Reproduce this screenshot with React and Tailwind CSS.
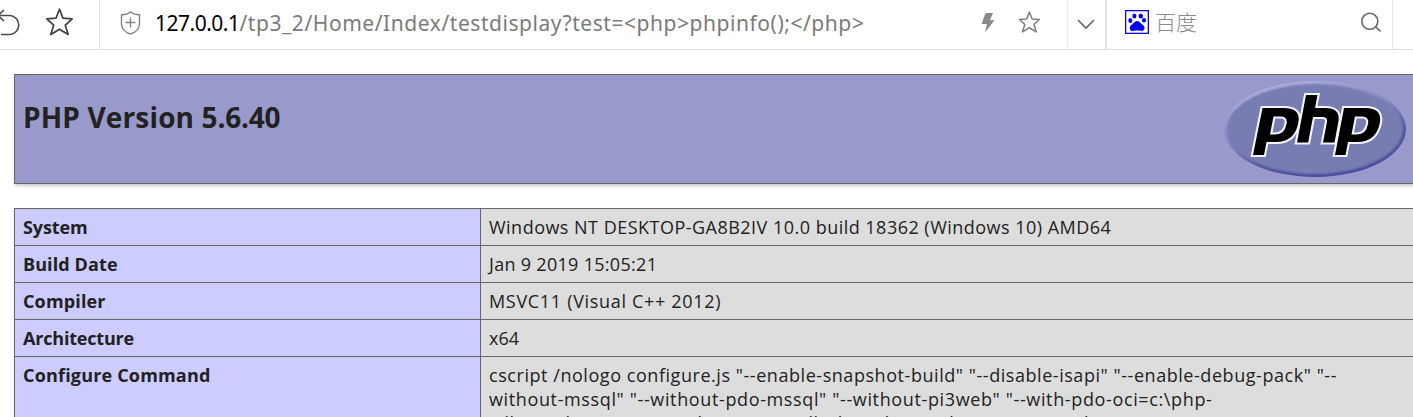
import React from "react";

const rows = [
  ["System", "Windows NT DESKTOP-GA8B2IV 10.0 build 18362 (Windows 10) AMD64", "tracking-[-0.1px]", "tracking-[0.48px]"],
  ["Build Date", "Jan 9 2019 15:05:21", "tracking-[0.1px]", "tracking-[0.3px]"],
  ["Compiler", "MSVC11 (Visual C++ 2012)", "tracking-[0.15px]", "tracking-[0.68px]"],
  ["Architecture", "x64", "tracking-[-0.2px]", "tracking-[0px]"],
];

const commandLines = [
  ['cscript /nologo configure.js "--enable-snapshot-build" "--disable-isapi" "--enable-debug-pack" "--', "tracking-[0.55px]"],
  ['without-mssql" "--without-pdo-mssql" "--without-pi3web" "--with-pdo-oci=c:\\php-', "tracking-[0.63px]"],
  ['sdk\\oracle\\x64\\instantclient_12_1\\sdk,shared" "--with-oci8-12c=c:\\php-', "tracking-[0.5px]"],
];

function Star({ className, sw }) {
  return (
    <svg className={className} viewBox="0 0 28 28" fill="none" stroke="currentColor" strokeWidth={sw} strokeLinejoin="round">
      <path d="M14.500 1.200 18 10.200 27.200 10.800 20.300 17.200 23.200 26.500 14.500 21.300 5.800 26.500 8.700 17.200 1.800 10.800 11 10.200Z" />
    </svg>
  );
}

function Paw() {
  return (
    <svg className="h-6 w-6 shrink-0" viewBox="0 0 24 24">
      <rect width="24" height="24" fill="#0a0adc" />
      <rect x="1.3" y="1.3" width="21.4" height="21.4" fill="#fff" />
      <g fill="#0505ee">
        <ellipse cx="5.3" cy="10.4" rx="2" ry="2.5" />
        <ellipse cx="9.4" cy="6" rx="2" ry="2.6" />
        <ellipse cx="15.8" cy="6" rx="2.200" ry="2.500" />
        <ellipse cx="19" cy="10.3" rx="2" ry="2.3" />
        <path d="M12.200 11c2 0 2.600 1.500 4.200 2.800 1.600 1.300 3.300 2.300 3.100 4.400-.2 2.300-2 3.100-4.200 2.600-2-.3-4-.3-6 0-2.300.5-4.400-.3-4.600-2.400-.2-2.200 1.300-3.200 3-4.600 1.500-1.200 2.200-2.800 4.500-2.800Z" />
      </g>
    </svg>
  );
}

function PhpLogo() {
  return (
    <svg className="h-[97px] w-[183px] shrink-0" viewBox="0 0 183 97">
      <defs>
        <linearGradient id="rim" x1="0.25" y1="0" x2="0.75" y2="1">
          <stop offset="0" stopColor="#b4b6e4" />
          <stop offset="0.45" stopColor="#8184bd" />
          <stop offset="0.7" stopColor="#5257a0" />
          <stop offset="1" stopColor="#44479a" />
        </linearGradient>
        <filter id="soft"><feGaussianBlur stdDeviation="0.8" /></filter>
      </defs>
      <ellipse cx="91" cy="48" rx="91" ry="48" fill="url(#rim)" />
      <ellipse cx="91" cy="48" rx="88" ry="45" fill="#777bb3" filter="url(#soft)" />
      <g stroke="#f4f4fb" strokeWidth="4.200" strokeLinejoin="miter" fill="#000" fillRule="evenodd" paintOrder="stroke">
        <path d="M38.500 27H60Q76.500 27 74.500 41Q71 61 52 61H42.500L40 74H29Z M49.500 35.500 46 53.500H51.500Q60.500 53.500 62.500 43Q64 35.500 56.500 35.500Z" />
        <path d="M82 14H93.500L91 27H101Q116.500 27 114.500 40L110.500 61.500H99L103 41Q104 36 98 36H89L84.200 61.500H73Z" />
        <path d="M120 27H141.500Q158 27 156 41Q152.500 61 133.500 61H124L121.500 74H111Z M131 35.500 127.500 53.500H133Q142 53.500 144 43Q145.500 35.500 138 35.500Z" />
      </g>
    </svg>
  );
}

function Toolbar() {
  return (
    <header className="flex h-[50px] shrink-0 items-stretch border-b border-[#e3e3e3] bg-white">
      <div className="flex w-[100px] shrink-0 border-r border-[#e3e3e3]">
        <svg className="mt-[8px] h-7 w-[22px] shrink-0 text-[#4b4b4b]" viewBox="0 0 22 28" fill="none" stroke="currentColor" strokeWidth="1.600">
          <path d="M4 2 -2 7.500 4 13M-2 7.500H10.500A9.600 9.600 0 0 1 10.500 26.500H1" />
        </svg>
        <Star className="mt-[8px] ml-[23px] h-7 w-7 shrink-0 text-[#3f3f3f]" sw="1.700" />
      </div>
      <div className="flex min-w-0 flex-1">
        <svg className="mt-[11px] ml-[20px] h-6 w-[21px] shrink-0 text-[#858585]" viewBox="0 0 21 24" fill="none" stroke="currentColor" strokeWidth="1.400">
          <path d="M10.500 1C8 3 4 3.700 1.500 3.700V13C1.500 18 6 21.500 10.500 23 15 21.500 19.500 18 19.500 13V3.700C17 3.700 13 3 10.500 1ZM10.500 6.500V16.500M5.500 11.500H15.500" />
        </svg>
        <div className="mt-[8px] ml-[14px] flex-1 font-['Noto_Sans',sans-serif] text-[21px] leading-[30px] whitespace-nowrap text-[#7b7b7b]">
          <span className="tracking-[-0.5px] text-black">127.0.0.1</span>
          <span className="tracking-[0.55px]">{"/tp3_2/Home/Index/testdisplay?test=<php>phpinfo();</php>"}</span>
        </div>
        <svg className="mt-[12px] h-[21px] w-[14px] shrink-0" viewBox="0 0 14 21" fill="#8a8a8a">
          <path d="M4.500 1H12L9 8.300H13.500L4 20.500 6 12H0.500Z" />
        </svg>
        <Star className="mt-[11px] mr-[27px] ml-[23px] h-[22px] w-[22px] shrink-0 text-[#808080]" sw="2" />
      </div>
      <div className="flex w-[40px] shrink-0 justify-center border-r-2 border-l border-r-[#dfe1e3] border-l-[#ececec]">
        <svg className="mt-[18px] h-3 w-[19px]" viewBox="0 0 19 12" fill="none" stroke="#666" strokeWidth="1.600">
          <path d="M1 2 9 10 17 2" />
        </svg>
      </div>
      <div className="flex w-[286px] shrink-0 border-r border-[#e3e3e3] pt-[10px] pl-[18px]">
        <Paw />
        <span className="mt-[-4px] ml-[6px] flex-1 font-['Noto_Sans_CJK_SC',sans-serif] text-[21px] leading-[30px] font-light text-[#8c8c8c]">百度</span>
        <svg className="mt-[2px] mr-[10px] h-[21px] w-[22px]" viewBox="0 0 22 21" fill="none" stroke="#666" strokeWidth="1.600">
          <circle cx="9.800" cy="9.300" r="8" />
          <path d="M15.500 14.700 20.700 19.500" />
        </svg>
      </div>
      <div className="w-[20px] shrink-0" />
    </header>
  );
}

export default function App() {
  return (
    <div className="flex h-[417px] w-[1413px] flex-col overflow-hidden bg-white font-['Open_Sans',sans-serif] text-[#222]">
      <Toolbar />
      <main className="mt-6 ml-[14px] w-[1420px]">
        <section className="flex h-[110px] justify-between border border-[#666] bg-[#9999cc] pt-[6px] pr-[26px] pl-2 shadow-[1px_2px_3px_#ccc]">
          <h1 className="mt-[16px] text-[28px] leading-[40px] font-bold">
            <span className="tracking-[0.15px]">PHP Version </span>
            <span className="tracking-[-0.2px]">5.6.40</span>
          </h1>
          <PhpLogo />
        </section>
        <table className="mt-6 w-[1420px] table-fixed border-collapse text-[18px] leading-6 shadow-[1px_2px_3px_#ccc]">
          <colgroup>
            <col className="w-[466px]" />
            <col />
          </colgroup>
          <tbody>
            {rows.map(([name, value, nameTracking, valueTracking]) => (
              <tr key={name} className="h-[37px]">
                <td className={`border border-[#666] bg-[#ccccff] px-2 py-[6px] font-bold ${nameTracking}`}>{name}</td>
                <td className={`border border-[#666] bg-[#dddddd] px-2 py-[6px] whitespace-nowrap ${valueTracking}`}>{value}</td>
              </tr>
            ))}
            <tr className="align-top">
              <td className="border border-[#666] bg-[#ccccff] px-2 py-[6px] font-bold tracking-[0.18px]">Configure Command</td>
              <td className="border border-[#666] bg-[#dddddd] px-2 py-[6px] whitespace-nowrap">
                {commandLines.map(([line, tracking]) => (
                  <div key={line} className={tracking}>{line}</div>
                ))}
              </td>
            </tr>
          </tbody>
        </table>
      </main>
    </div>
  );
}
